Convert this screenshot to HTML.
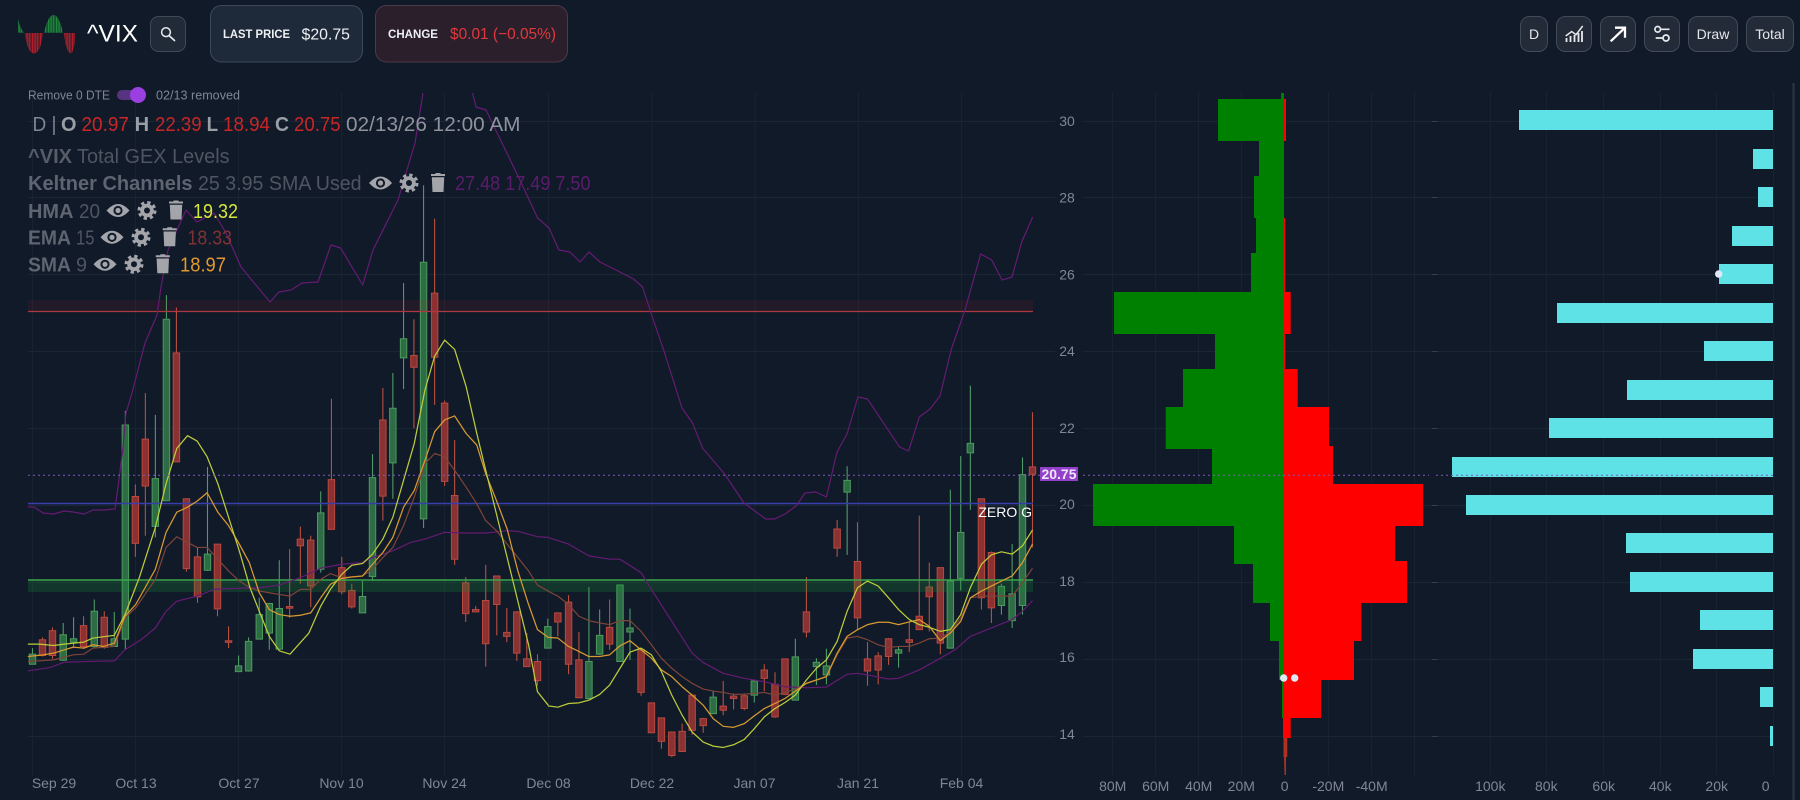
<!DOCTYPE html>
<html><head><meta charset="utf-8"><title>^VIX</title>
<style>
html,body{margin:0;padding:0;background:#101a29;width:1800px;height:800px;overflow:hidden}
svg{display:block}
text{font-family:"Liberation Sans",sans-serif}
.ax{font-size:14px;fill:#7f8794;text-anchor:middle}
.n{vector-effect:non-scaling-stroke}
.r{font-size:20px}
.b{font-weight:bold}
</style></head><body>
<svg width="1800" height="800" viewBox="0 0 1800 800" xmlns="http://www.w3.org/2000/svg">
<defs>
<pattern id="gs" width="1.6" height="4" patternUnits="userSpaceOnUse"><rect width="1.1" height="4" fill="#1f8f3c"/></pattern>
<pattern id="rs" width="1.6" height="4" patternUnits="userSpaceOnUse"><rect width="1.1" height="4" fill="#b8202c"/></pattern>
<symbol id="eye" overflow="visible"><path d="M-11.5 0Q0-13 11.5 0Q0 13-11.5 0Z" fill="#a3a5aa"/><circle r="4.6" fill="#101a29"/><circle r="2.6" fill="#a3a5aa"/></symbol>
<symbol id="gear" overflow="visible"><circle r="6.8" fill="#a3a5aa"/><circle r="8" fill="none" stroke="#a3a5aa" stroke-width="3" stroke-dasharray="3.3 2.98"/><circle r="3" fill="#101a29"/></symbol>
<symbol id="trash" overflow="visible"><path d="M-7-9H-2.5V-10H2.5V-9H7V-7H-7ZM-6.2-5.8H6.2L5.5 9H-5.5Z" fill="#a3a5aa"/></symbol>
</defs>
<rect width="1800" height="800" fill="#101a29"/>

<!-- grid -->
<g stroke="#1b2635" stroke-width="1" fill="none">
<path d="M28 121.5H1055M1083 121.5H1773M28 197.5H1055M1083 197.5H1773M28 274.5H1055M1083 274.5H1773M28 351.5H1055M1083 351.5H1773M28 428.5H1055M1083 428.5H1773M28 505.5H1055M1083 505.5H1773M28 582.5H1055M1083 582.5H1773M28 659.5H1055M1083 659.5H1773M28 736.5H1055M1083 736.5H1773"/>
</g>
<g stroke="#182332" stroke-width="1" fill="none">
<path d="M32.5 93V776M135.5 93V776M238.5 93V776M341.5 93V776M444.5 93V776M548.5 93V776M652 93V776M755 93V776M858.5 93V776M961.5 93V776"/>
<path d="M1112.5 92V775M1155.5 92V775M1198.5 92V775M1241.5 92V775M1328.5 92V775M1371.5 92V775M1414.5 92V775M1490.5 92V775M1546.5 92V775M1603.5 92V775M1660.5 92V775M1716.5 92V775M1773.5 92V775"/>
</g>
<path d="M1432 121.5h6M1432 197.5h6M1432 274.5h6M1432 351.5h6M1432 428.5h6M1432 505.5h6M1432 582.5h6M1432 659.5h6M1432 736.5h6" stroke="#333d4b" fill="none"/>
<rect x="1792.5" y="83" width="2" height="717" fill="#2b3544"/>

<!-- candles part 1 -->
<g transform="translate(0,279) scale(.35714,.33557)">
<path class="n" fill="none" stroke="#4f9a68" stroke-width="1.1" d="M91 1100V1148M177 1025V1138M206 1008V1100M264 955V1100M320 992V1095M351 393V1105M435 405V770M466 48V660M581 560V870M668 1122V1170M696 1068V1170M726 950V1073M754 965V1105M782 838V1105M898 633V875M1015 900V995M1043 522V900M1100 280V655M1130 12V328M1186 -279V742M1534 1012V1100"/>
<path class="n" fill="#2d6c45" stroke="#4c9a5c" stroke-width="1" d="M82 1118h18v30h-18zM168 1060h18v76h-18zM197 1072h18v10h-18zM255 990h18v105h-18zM311 1072h18v23h-18zM342 435h18v638h-18zM426 595h18v142h-18zM457 120h18v541h-18zM572 820h18v48h-18zM659 1153h18v17h-18zM687 1080h18v88h-18zM717 1000h18v73h-18zM745 967h18v88h-18zM773 982h18v121h-18zM889 697h18v168h-18zM1006 946h18v49h-18zM1034 592h18v295h-18zM1091 385h18v163h-18zM1121 178h18v57h-18zM1177 -50h18v765h-18zM1525 1036h18v64h-18z"/>
<path class="n" fill="none" stroke="#b8503f" stroke-width="1.1" d="M119 1068V1125M147 1038V1132M234 1005V1100M292 990V1102M379 612V828M407 340V765M494 85V545M522 655V872M553 800V965M609 790V1005M640 1035V1100M811 805V1010M841 738V908M870 765V978M928 357V746M957 828V940M985 908V982M1072 325V720M1159 120V445M1217 -180V375M1245 362V617M1273 480V852M1304 888V1022M1332 975V993M1360 852V1155M1391 885V1062M1419 980V1082M1447 990V1138M1475 1055V1155M1505 1118V1212M1562 995V1065"/>
<path class="n" fill="#8a3232" stroke="#b84840" stroke-width="1" d="M110 1075h18v47h-18zM138 1048h18v74h-18zM225 1033h18v62h-18zM283 1008h18v90h-18zM370 648h18v140h-18zM398 477h18v140h-18zM485 220h18v325h-18zM513 655h18v208h-18zM544 828h18v119h-18zM600 790h18v193h-18zM631 1078h18v5h-18zM802 976h18v5h-18zM832 775h18v20h-18zM861 778h18v137h-18zM919 598h18v148h-18zM948 860h18v72h-18zM976 928h18v49h-18zM1063 420h18v227h-18zM1150 228h18v35h-18zM1208 42h18v191h-18zM1236 370h18v233h-18zM1264 645h18v190h-18zM1295 905h18v92h-18zM1323 985h18v7h-18zM1351 958h18v129h-18zM1382 885h18v85h-18zM1410 1053h18v12h-18zM1438 992h18v123h-18zM1466 1132h18v23h-18zM1496 1140h18v57h-18zM1553 995h18v27h-18z"/>
</g>
<!-- candles part 2 -->
<g transform="translate(530,279) scale(.35714,.33557)">
<path class="n" fill="none" stroke="#4f9a68" stroke-width="1.1" d="M165 918V1250M195 985V1120M252 912V1140M280 982V1135M513 1228V1296M628 1195V1262M743 1072V1256M802 1130V1210M830 1102V1208M888 558V822M1032 1095V1158M1177 628V1102M1206 528V928M1233 318V688M1320 908V1000M1350 790V1040M1379 532V1000"/>
<path class="n" fill="#2d6c45" stroke="#4c9a5c" stroke-width="1" d="M156 1140h18v110h-18zM186 1062h18v56h-18zM243 912h18v228h-18zM271 1040h18v12h-18zM504 1246h18v49h-18zM619 1198h18v42h-18zM734 1126h18v129h-18zM793 1142h18v13h-18zM821 1153h18v27h-18zM879 600h18v35h-18zM1023 1105h18v10h-18zM1168 900h18v200h-18zM1197 755h18v137h-18zM1224 490h18v28h-18zM1311 916h18v57h-18zM1341 938h18v80h-18zM1370 583h18v390h-18z"/>
<path class="n" fill="none" stroke="#b8503f" stroke-width="1.1" d="M108 942V1178M137 1052V1248M223 955V1105M311 1100V1242M340 1262V1352M368 1308V1400M397 1350V1425M426 1325V1410M454 1240V1358M485 1308V1352M541 1198V1300M570 1235V1283M600 1235V1285M656 1148V1228M686 1172V1308M714 1132V1240M774 888V1068M860 718V828M917 725V1045M945 1082V1212M975 1112V1208M1004 1070V1150M1062 1020V1112M1090 705V1045M1118 845V1050M1149 860V1118M1264 655V985M1292 812V1025M1407 397V800"/>
<path class="n" fill="#8a3232" stroke="#b84840" stroke-width="1" d="M99 963h18v185h-18zM128 1135h18v113h-18zM214 1038h18v50h-18zM302 1105h18v127h-18zM331 1263h18v89h-18zM359 1308h18v70h-18zM388 1350h18v70h-18zM417 1348h18v60h-18zM445 1240h18v105h-18zM476 1310h18v21h-18zM532 1273h18v12h-18zM561 1243h18v7h-18zM591 1242h18v38h-18zM647 1165h18v25h-18zM677 1208h18v97h-18zM705 1132h18v106h-18zM765 992h18v60h-18zM851 745h18v57h-18zM908 842h18v168h-18zM936 1132h18v36h-18zM966 1123h18v42h-18zM995 1072h18v53h-18zM1053 1075h18v8h-18zM1081 1005h18v40h-18zM1109 918h18v29h-18zM1140 860h18v225h-18zM1255 655h18v295h-18zM1283 815h18v165h-18zM1398 560h18v22h-18z"/>
</g>

<!-- zones -->
<rect x="28" y="300" width="1005" height="11" fill="#c81e30" opacity=".1"/>
<rect x="28" y="580" width="1005" height="12" fill="#189038" opacity=".24"/>
<path d="M28 311.5H1033" stroke="#ad3842" stroke-width="1.3"/>
<path d="M28 503.5H1033" stroke="#383eac" stroke-width="1.4"/>
<path d="M28 580H1033" stroke="#3aa34c" stroke-width="1.4"/>

<!-- upper keltner -->
<path fill="none" stroke="#651b72" stroke-width="1.2" stroke-linejoin="round" d="M28 507L34 507L43 513L54 514L64 511L73 512L84 514L93 510L104 510L115 509L118 487L123 447L126 413L132 393L145 343L157 315L161 287L168 250L186 210L197 222L214 213L226 233L241 267L260 290L270 302L279 292L291 290L302 283L318 282L331 245L340.6 248L362.7 285L373 250L398 200L415 143L423 93M472.6 93L476 107L486 110L518.5 177L537.6 218L549 228L559 250L570 252L580 262L589 252L600 262L633.6 279L642.5 287L653 319L664 351L682 408L692.5 423L702.5 448L724.6 474L744 503L765.7 519L774.6 519L785 514L796 506L805 493L815.7 492L826.4 497L837 452L847 434L858 397L867.5 399L899.6 447L908.6 451L919.3 417L930 409L940 396L951.4 349L965 310L980.7 254L991.7 260L1002 280L1012 277L1021.7 242L1032.7 217"/>

<!-- MA lines 1 -->
<g transform="translate(0,279) scale(.35714,.33557)" fill="none" stroke-linejoin="round">
<path class="n" stroke="#651b72" stroke-width="1.2" d="M78 1168L140 1158L180 1142L235 1140L320 1138L350 1105L395 1075L435 1040L465 990L495 960L552 945L600 925L660 922L726 920L782 912L841 890L898 862L957 850L1015 845L1043 830L1100 810L1150 785L1190 775L1245 755L1300 757L1360 757L1420 750L1450 752L1505 768L1534 770"/>
<path class="n" stroke="#7f4438" stroke-width="1.2" d="M78 1140L150 1135L205 1120L235 1118L260 1100L320 1095L350 1010L380 980L435 895L465 800L495 768L525 785L552 800L580 800L610 835L640 870L670 900L700 920L726 930L754 935L782 940L812 945L841 925L870 925L898 895L925 878L957 890L1015 885L1043 865L1072 830L1100 800L1130 735L1160 650L1190 550L1217 520L1245 530L1273 570L1305 620L1335 670L1360 720L1390 750L1420 790L1450 830L1480 870L1505 912L1535 930"/>
<path class="n" stroke="#d89a30" stroke-width="1.25" d="M78 1125L120 1120L150 1115L205 1097L235 1100L260 1090L290 1095L320 1085L350 1005L380 970L435 865L465 755L495 695L525 680L552 662L580 637L610 695L640 735L670 790L698 845L726 935L754 985L782 1000L812 1005L841 1002L870 995L898 950L925 910L957 892L985 888L1015 885L1043 850L1072 815L1100 770L1130 680L1160 630L1190 540L1217 455L1245 420L1273 408L1305 460L1335 495L1360 580L1390 660L1420 745L1450 870L1480 970L1505 1045L1535 1068"/>
<path class="n" stroke="#bccc3a" stroke-width="1.25" d="M78 1088L110 1088L150 1092L180 1088L235 1082L260 1070L320 1062L350 1000L390 890L435 740L465 610L495 505L525 467L552 483L580 530L610 610L640 710L670 810L700 920L726 990L754 1065L782 1108L812 1118L865 1055L898 975L925 925L957 880L985 853L1015 848L1043 820L1072 775L1100 710L1130 600L1160 490L1190 330L1217 230L1245 182L1273 210L1305 320L1335 460L1360 570L1390 700L1420 830L1450 960L1480 1090L1505 1230L1535 1270"/>
</g>
<!-- MA lines 2 -->
<g transform="translate(530,279) scale(.35714,.33557)" fill="none" stroke-linejoin="round">
<path class="n" stroke="#651b72" stroke-width="1.2" d="M50 770L108 790L165 825L223 835L252 835L311 875L340 925L397 1020L454 1115L485 1143L541 1175L600 1190L656 1200L714 1215L774 1218L830 1216L888 1178L917 1175L945 1180L1004 1192L1032 1190L1090 1165L1149 1130L1190 1105L1233 1065L1292 1040L1350 1015L1379 990L1407 958"/>
<path class="n" stroke="#7f4438" stroke-width="1.2" d="M50 930L78 945L108 970L137 1005L165 1018L195 1025L223 1030L252 1018L280 1018L311 1050L340 1090L368 1130L397 1160L426 1185L454 1205L485 1222L513 1228L541 1232L570 1238L600 1237L628 1235L656 1232L686 1240L714 1232L743 1222L774 1205L802 1195L830 1185L860 1120L888 1070L917 1065L945 1075L975 1090L1004 1098L1032 1095L1062 1095L1090 1085L1118 1072L1149 1070L1177 1052L1206 1010L1233 950L1264 945L1292 945L1320 945L1350 945L1379 905L1407 862"/>
<path class="n" stroke="#d89a30" stroke-width="1.25" d="M50 1068L78 1070L108 1095L137 1110L165 1125L195 1125L223 1120L252 1093L280 1078L311 1105L340 1130L368 1165L397 1185L426 1215L454 1240L485 1270L513 1310L541 1333L570 1336L600 1325L628 1302L656 1280L686 1265L714 1250L743 1228L774 1205L802 1195L830 1185L860 1115L888 1065L917 1045L945 1030L975 1023L1004 1023L1032 1030L1062 1022L1090 1015L1118 1035L1149 1078L1177 1055L1206 1020L1233 950L1264 930L1292 915L1320 900L1350 885L1379 845L1407 790"/>
<path class="n" stroke="#bccc3a" stroke-width="1.25" d="M50 1272L78 1276L108 1265L137 1263L165 1255L195 1238L223 1210L252 1160L280 1112L311 1100L340 1120L368 1170L397 1240L426 1300L454 1350L485 1380L513 1392L541 1396L570 1388L600 1372L628 1340L656 1305L686 1280L714 1262L743 1240L774 1195L802 1160L830 1135L860 1080L888 990L917 920L945 900L975 915L1004 950L1032 985L1062 1015L1090 1030L1118 1038L1149 1050L1177 1045L1206 1000L1233 920L1264 850L1292 822L1320 813L1350 820L1379 795L1407 748"/>
</g>

<!-- GEX bars -->
<path fill="#008000" d="M1281 93h3v6h-3zM1218 99H1284V141H1218zM1259 141H1284V176H1259zM1254 176H1284V218H1254zM1256 218H1284V253H1256zM1251 253H1284V292H1251zM1114 292H1284V334H1114zM1215 334H1284V369H1215zM1183 369H1284V407H1183zM1165.7 407H1284V449H1165.7zM1212 449H1284V484H1212zM1093 484H1284V526H1093zM1234 526H1284V564H1234zM1253 564H1284V603H1253zM1270 603H1284V641H1270zM1279 641H1284V680H1279zM1282 680H1284V718H1282z"/>
<path fill="#ff0000" d="M1284 99H1286V141H1284zM1284 218H1285V292H1284zM1284 292H1290.7V334H1284zM1284 334H1285V369H1284zM1284 369H1297.7V407H1284zM1284 407H1329V446H1284zM1284 446H1333V484H1284zM1284 484H1423V526H1284zM1284 526H1395V561H1284zM1284 561H1407V603H1284zM1284 603H1361.3V641H1284zM1284 641H1354V680H1284zM1284 680H1321V718H1284zM1283 718H1290.7V738H1283z"/>
<path fill="#b03022" d="M1283.5 738H1287.3V757H1283.5zM1284 757H1286V775H1284.6z"/>
<circle cx="1283.7" cy="678" r="3.7" fill="#dfe8f5"/>
<circle cx="1294.7" cy="678" r="3.7" fill="#dfe8f5"/>

<!-- OI bars -->
<path fill="#5ee2e6" d="M1519 110H1773V130H1519zM1753 149H1773V169H1753zM1758 187H1773V207H1758zM1732 226H1773V246H1732zM1719 264H1773V284H1719zM1557 303H1773V323H1557zM1704 341H1773V361H1704zM1627 380H1773V400H1627zM1549 418H1773V438H1549zM1452 457H1773V477H1452zM1466 495H1773V515H1466zM1626 533H1773V553H1626zM1630 572H1773V592H1630zM1700 610H1773V630H1700zM1693 649H1773V669H1693zM1760 687H1773V707H1760zM1770 726H1773V746H1770z"/>
<circle cx="1718.7" cy="274" r="3.7" fill="#dfe8f5"/>

<!-- current price dotted -->
<path d="M28 475.3H1040M1083 475.3H1429M1436 475.3H1773" stroke="#7d5bb5" stroke-width="1" stroke-dasharray="2 3"/>
<rect x="1040" y="467" width="38" height="14" fill="#9340c8"/>
<text x="1059" y="479" font-size="14" font-weight="bold" fill="#f0e6fa" text-anchor="middle" textLength="35" lengthAdjust="spacingAndGlyphs">20.75</text>
<text x="1032" y="517" font-size="14" fill="#ffffff" text-anchor="end">ZERO G</text>

<!-- axes -->
<text class="ax" x="1067" y="126">30</text><text class="ax" x="1067" y="202.5">28</text><text class="ax" x="1067" y="279.5">26</text><text class="ax" x="1067" y="356">24</text><text class="ax" x="1067" y="433">22</text><text class="ax" x="1067" y="509">20</text><text class="ax" x="1067" y="586">18</text><text class="ax" x="1067" y="662">16</text><text class="ax" x="1067" y="739">14</text>
<text class="ax" x="54" y="788">Sep 29</text><text class="ax" x="136" y="788">Oct 13</text><text class="ax" x="239" y="788">Oct 27</text><text class="ax" x="341.5" y="788">Nov 10</text><text class="ax" x="444.5" y="788">Nov 24</text><text class="ax" x="548.5" y="788">Dec 08</text><text class="ax" x="652" y="788">Dec 22</text><text class="ax" x="754.5" y="788">Jan 07</text><text class="ax" x="858" y="788">Jan 21</text><text class="ax" x="961.5" y="788">Feb 04</text>
<text class="ax" x="1112.7" y="791">80M</text><text class="ax" x="1155.7" y="791">60M</text><text class="ax" x="1198.7" y="791">40M</text><text class="ax" x="1241.3" y="791">20M</text><text class="ax" x="1284.7" y="791">0</text><text class="ax" x="1328.3" y="791">-20M</text><text class="ax" x="1371.7" y="791">-40M</text>
<text class="ax" x="1490.3" y="791">100k</text><text class="ax" x="1546.3" y="791">80k</text><text class="ax" x="1603.7" y="791">60k</text><text class="ax" x="1660.3" y="791">40k</text><text class="ax" x="1716.7" y="791">20k</text><text class="ax" x="1765.7" y="791">0</text>

<!-- header -->
<path fill="url(#gs)" d="M18 19Q20 28 24 32.7H18ZM44 32.7Q48 15 53.5 15Q59 15 63 32.7Z"/>
<path fill="url(#rs)" d="M25 33Q27 53 34 53.5Q41 53 42.7 33ZM64 33Q66 53 71 53.5Q75 50 75 33Z"/>
<text x="87" y="41.5" font-size="24" fill="#ffffff" textLength="51" lengthAdjust="spacingAndGlyphs">^VIX</text>
<rect x="150.5" y="16.5" width="35" height="35" rx="8" fill="#212a37" stroke="#3e4856"/>
<circle cx="166" cy="32.2" r="4.4" fill="none" stroke="#e8ebee" stroke-width="1.5"/>
<path d="M169.5 36L174.5 40.5" stroke="#e8ebee" stroke-width="1.7" stroke-linecap="round"/>
<rect x="210.5" y="5.5" width="152" height="56.5" rx="11" fill="#1e2a3a" stroke="#3c4858"/>
<text x="223" y="38" font-size="12" font-weight="bold" fill="#eef1f4" textLength="67" lengthAdjust="spacingAndGlyphs">LAST PRICE</text>
<text x="301.5" y="39.5" font-size="16" fill="#eef1f4" textLength="48.5" lengthAdjust="spacingAndGlyphs">$20.75</text>
<rect x="375.5" y="5.5" width="192" height="56.5" rx="11" fill="#2a1f2b" stroke="#4c3a48"/>
<text x="388" y="38" font-size="12" font-weight="bold" fill="#eef1f4" textLength="50" lengthAdjust="spacingAndGlyphs">CHANGE</text>
<text x="450" y="39" font-size="16" fill="#e0393c" textLength="106" lengthAdjust="spacingAndGlyphs">$0.01 (−0.05%)</text>

<!-- right buttons -->
<g fill="#232b38" stroke="#414b58">
<rect x="1520.5" y="16.5" width="27" height="35" rx="9"/>
<rect x="1556.5" y="16.5" width="35" height="35" rx="9"/>
<rect x="1600.5" y="16.5" width="35" height="35" rx="9"/>
<rect x="1644.5" y="16.5" width="35" height="35" rx="9"/>
<rect x="1688.5" y="16.5" width="49" height="35" rx="9"/>
<rect x="1746.5" y="16.5" width="47" height="35" rx="9"/>
</g>
<g font-size="14" fill="#e4e7ea" text-anchor="middle"><text x="1534" y="39">D</text><text x="1713" y="39">Draw</text><text x="1770" y="39">Total</text></g>
<path d="M1566.5 42v-4M1570.5 42v-6M1574.5 42v-7M1578.5 42v-9M1582 42v-11" stroke="#e8ebee" stroke-width="1.8" fill="none"/>
<path d="M1565.7 36L1571.7 31.5L1576 34.7L1582.7 26" stroke="#e8ebee" stroke-width="1.5" fill="none"/>
<path d="M1610.7 41.3L1625 27.7M1615 27.7H1625V37.7" stroke="#fff" stroke-width="2.3" fill="none"/>
<g stroke="#e8ebee" fill="none" stroke-width="1.7"><circle cx="1657.7" cy="29.3" r="2.8"/><path d="M1661 29.3H1669.5M1655.7 38H1663"/><circle cx="1666" cy="38" r="3"/></g>

<!-- toggle row -->
<text x="28" y="99.5" font-size="13" fill="#7f8692" textLength="82" lengthAdjust="spacingAndGlyphs">Remove 0 DTE</text>
<rect x="117" y="90" width="25" height="10" rx="5" fill="#573481"/>
<circle cx="138" cy="95" r="8" fill="#9a3fe0"/>
<text x="156" y="99.5" font-size="13" fill="#7f8692" textLength="84" lengthAdjust="spacingAndGlyphs">02/13 removed</text>

<!-- OHLC -->
<g class="r" font-size="20">
<text x="32.5" y="131" fill="#7f8692" textLength="24" lengthAdjust="spacingAndGlyphs">D |</text>
<text x="61" y="131" class="b" fill="#9a9ea6" textLength="15.5" lengthAdjust="spacingAndGlyphs">O</text>
<text x="81.5" y="131" fill="#c92626" textLength="47.5" lengthAdjust="spacingAndGlyphs">20.97</text>
<text x="134.7" y="131" class="b" fill="#9a9ea6" textLength="14.5" lengthAdjust="spacingAndGlyphs">H</text>
<text x="155" y="131" fill="#c92626" textLength="46.7" lengthAdjust="spacingAndGlyphs">22.39</text>
<text x="206.6" y="131" class="b" fill="#9a9ea6" textLength="11.5" lengthAdjust="spacingAndGlyphs">L</text>
<text x="223" y="131" fill="#c92626" textLength="47" lengthAdjust="spacingAndGlyphs">18.94</text>
<text x="275" y="131" class="b" fill="#9a9ea6" textLength="14" lengthAdjust="spacingAndGlyphs">C</text>
<text x="294" y="131" fill="#c92626" textLength="46.6" lengthAdjust="spacingAndGlyphs">20.75</text>
<text x="346" y="131" fill="#8e939c" textLength="174.5" lengthAdjust="spacingAndGlyphs">02/13/26 12:00 AM</text>

<text x="28" y="163" class="b" fill="#565c68" textLength="44" lengthAdjust="spacingAndGlyphs">^VIX</text>
<text x="77" y="163" fill="#4f5561" textLength="152.6" lengthAdjust="spacingAndGlyphs">Total GEX Levels</text>

<text x="28" y="190" class="b" fill="#5e6470" textLength="164.5" lengthAdjust="spacingAndGlyphs">Keltner Channels</text>
<text x="198" y="190" fill="#4f5561" textLength="163.6" lengthAdjust="spacingAndGlyphs">25 3.95 SMA Used</text>
<text x="455" y="190" fill="#5c1c6c" textLength="135.5" lengthAdjust="spacingAndGlyphs">27.48 17.49 7.50</text>

<text x="28" y="218" class="b" fill="#5e6470" textLength="45.5" lengthAdjust="spacingAndGlyphs">HMA</text>
<text x="79" y="218" fill="#4f5561" textLength="21" lengthAdjust="spacingAndGlyphs">20</text>
<text x="193" y="218" fill="#d6e63a" textLength="45" lengthAdjust="spacingAndGlyphs">19.32</text>

<text x="28" y="244.5" class="b" fill="#5e6470" textLength="43" lengthAdjust="spacingAndGlyphs">EMA</text>
<text x="76" y="244.5" fill="#4f5561" textLength="18.5" lengthAdjust="spacingAndGlyphs">15</text>
<text x="187.5" y="244.5" fill="#7f3232" textLength="44.5" lengthAdjust="spacingAndGlyphs">18.33</text>

<text x="28" y="271.5" class="b" fill="#5e6470" textLength="43" lengthAdjust="spacingAndGlyphs">SMA</text>
<text x="76" y="271.5" fill="#4f5561" textLength="11" lengthAdjust="spacingAndGlyphs">9</text>
<text x="180" y="271.5" fill="#e2992f" textLength="46" lengthAdjust="spacingAndGlyphs">18.97</text>
</g>
<g>
<use href="#eye" x="380.5" y="183"/><use href="#gear" x="409" y="183"/><use href="#trash" x="438" y="183"/>
<use href="#eye" x="118" y="210.5"/><use href="#gear" x="147" y="210.5"/><use href="#trash" x="176" y="210.5"/>
<use href="#eye" x="112" y="237.3"/><use href="#gear" x="141" y="237.3"/><use href="#trash" x="169.7" y="237.3"/>
<use href="#eye" x="105" y="264.3"/><use href="#gear" x="134" y="264.3"/><use href="#trash" x="162.8" y="264.3"/>
</g>
</svg>
</body></html>
